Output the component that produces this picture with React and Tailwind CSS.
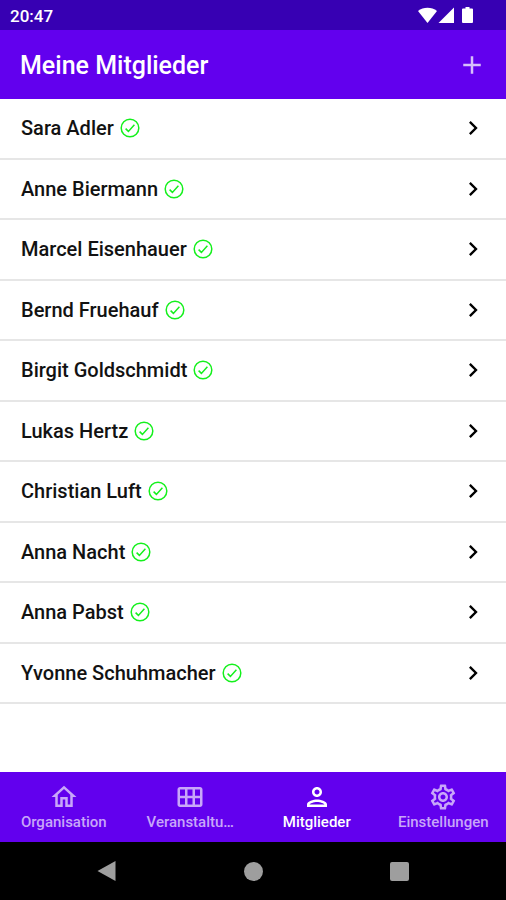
import {
  MdAdd,
  MdChevronRight,
  MdOutlineCalendarViewMonth,
  MdOutlineHome,
  MdOutlinePerson,
  MdOutlineSettings,
} from "react-icons/md";

const members = [
  "Sara Adler",
  "Anne Biermann",
  "Marcel Eisenhauer",
  "Bernd Fruehauf",
  "Birgit Goldschmidt",
  "Lukas Hertz",
  "Christian Luft",
  "Anna Nacht",
  "Anna Pabst",
  "Yvonne Schuhmacher",
];

const tabs = [
  { label: "Organisation", icon: MdOutlineHome },
  { label: "Veranstaltu…", icon: MdOutlineCalendarViewMonth },
  { label: "Mitglieder", icon: MdOutlinePerson, active: true },
  { label: "Einstellungen", icon: MdOutlineSettings },
];

const CheckCircle = () => (
  <svg
    viewBox="0 0 20 20"
    className="size-5 shrink-0"
    fill="none"
    stroke="#14f01c"
    aria-label="Bestätigt"
  >
    <circle cx="10" cy="10" r="8.8" strokeWidth="1.5" />
    <path d="M5.6 10.6l2.8 2.8 6-6.6" strokeWidth="1.5" />
  </svg>
);

const StatusBar = () => (
  <div className="flex h-[30px] items-center justify-between bg-[#3700b3] pl-[10px] pr-8 text-white">
    <span className="pt-[2px] text-[17px] leading-5 font-medium">20:47</span>
    <svg viewBox="0 0 56 18" className="h-[18px] w-14" fill="currentColor">
      <path d="M0 5.1C5.4 0.7 13.6 0.7 19 5.1L9.5 17z" />
      <path d="M36 1.500v15.500H20.500z" />
      <path d="M47.500 1h4v1.500h2.500q1 0 1 1v12.500q0 1-1 1h-9q-1 0-1-1v-12.500q0-1 1-1h2.500z" />
    </svg>
  </div>
);

const AppBar = () => (
  <header className="flex h-[69px] items-center justify-between bg-[#6200ee] pl-5 pr-[19px]">
    <h1 className="pt-[2px] text-[25px] leading-8 font-medium text-white">
      Meine Mitglieder
    </h1>
    <button type="button" aria-label="Mitglied hinzufügen">
      <MdAdd className="size-[30px] text-white/75" />
    </button>
  </header>
);

const MemberRow = ({ name }) => (
  <li className="border-b-2 border-[#e6e6e6]">
    <a
      href="#"
      className="flex h-full items-center justify-between pl-[21px] pr-[19px]"
    >
      <span className="flex items-center gap-[6px] text-[20px] leading-6 font-medium text-[#121212]">
        {name}
        <CheckCircle />
      </span>
      <MdChevronRight className="size-7 text-black" />
    </a>
  </li>
);

const BottomTabs = () => (
  <nav className="grid h-[70px] grid-cols-4 bg-[#6200ee]">
    {tabs.map(({ label, icon: Icon, active }) => (
      <a
        key={label}
        href="#"
        aria-current={active ? "page" : undefined}
        className={`flex min-w-0 flex-col items-center pt-[10px] pl-px ${
          active ? "text-white" : "text-[#c8a6f9]"
        }`}
      >
        <Icon className="size-[30px] shrink-0" />
        <span className="text-[15px] leading-5 font-medium whitespace-nowrap">
          {label}
        </span>
      </a>
    ))}
  </nav>
);

const SystemNav = () => (
  <div className="grid h-[58px] grid-cols-[1fr_80px_1fr] items-center bg-black text-[#9e9e9e]">
    <button type="button" aria-label="Zurück" className="justify-self-center">
      <svg viewBox="0 0 20 22" className="h-[22px] w-5" fill="currentColor">
        <path d="M18.500 1v20L0.500 11z" />
      </svg>
    </button>
    <button
      type="button"
      aria-label="Startbildschirm"
      className="size-[19px] justify-self-center rounded-full bg-[#9e9e9e]"
    />
    <button
      type="button"
      aria-label="Letzte Apps"
      className="size-[19px] justify-self-center rounded-xs bg-[#9e9e9e]"
    />
  </div>
);

export default function App() {
  return (
    <div className="flex min-h-screen flex-col bg-white font-['Roboto',sans-serif]">
      <StatusBar />
      <AppBar />
      <main className="flex flex-1 flex-col pb-[68px]">
        <ul className="grid flex-1 auto-rows-fr">
          {members.map((name) => (
            <MemberRow key={name} name={name} />
          ))}
        </ul>
      </main>
      <BottomTabs />
      <SystemNav />
    </div>
  );
}
